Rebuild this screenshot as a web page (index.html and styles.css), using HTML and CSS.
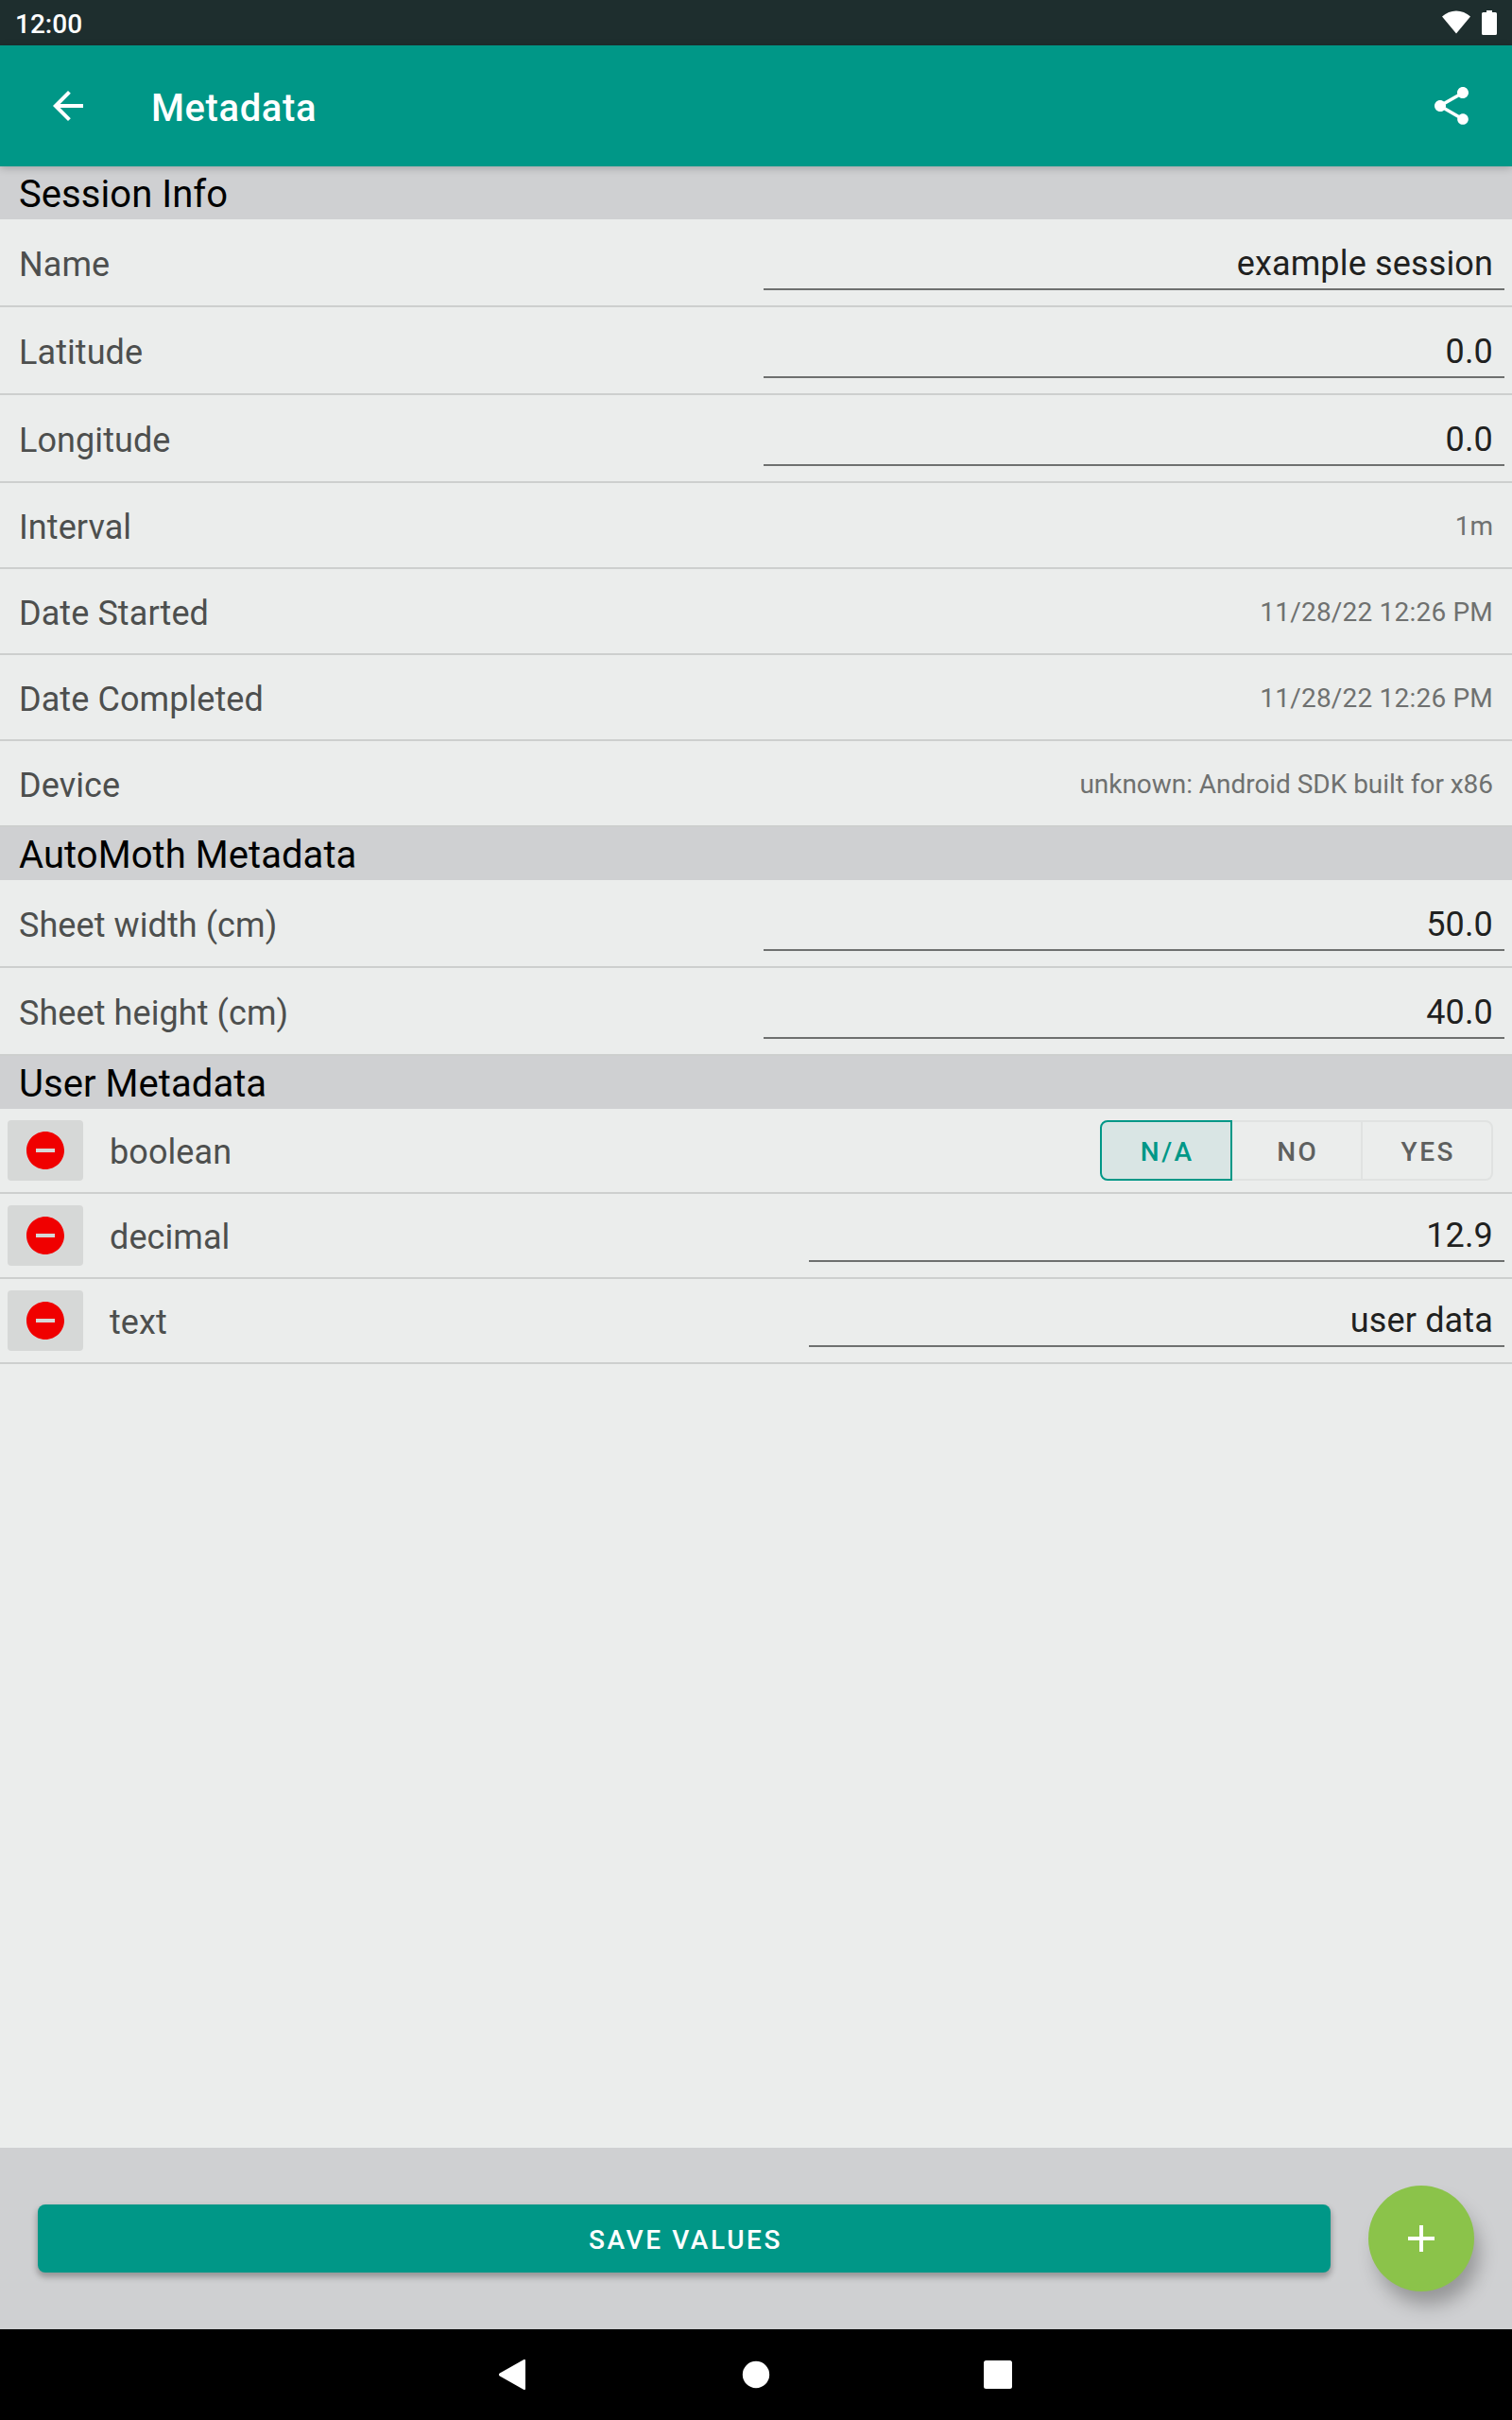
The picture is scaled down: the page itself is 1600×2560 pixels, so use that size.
FILE: index.html
```
<!DOCTYPE html>
<html lang="en">
<head>
<meta charset="utf-8">
<title>Metadata</title>
<link rel="stylesheet" href="styles.css">
</head>
<body>
<div class="status-bar">
  <span class="clock">12:00</span>
  <svg class="status-icons" width="60" height="28" viewBox="0 0 60 28">
    <path d="M2 7.5C10.500-.5 23.500-.5 32 7.500L17 25.500Z"/>
    <path d="M49 1h6v2h3.500q1.500 0 1.500 1.500V25.500q0 1.500-1.500 1.500H45.500q-1.500 0-1.500-1.500V4.500q0-1.500 1.500-1.500H49Z"/>
  </svg>
</div>
<header class="app-bar">
  <svg class="icon" viewBox="0 0 24 24"><path d="M20 11H7.830l5.590-5.590L12 4l-8 8 8 8 1.410-1.410L7.830 13H20v-2z"/></svg>
  <h1 class="app-title">Metadata</h1>
  <svg class="icon" viewBox="0 0 24 24"><path d="M18 16.080c-.76 0-1.440.3-1.960.77L8.910 12.700c.05-.23.09-.46.09-.7s-.04-.47-.09-.7l7.050-4.110c.54.5 1.250.81 2.040.81 1.660 0 3-1.340 3-3s-1.340-3-3-3-3 1.340-3 3c0 .24.04.47.09.7L8.040 9.810C7.500 9.310 6.790 9 6 9c-1.660 0-3 1.340-3 3s1.340 3 3 3c.79 0 1.500-.31 2.040-.81l7.120 4.160c-.05.21-.08.43-.08.65 0 1.610 1.310 2.920 2.920 2.920s2.920-1.310 2.920-2.920-1.310-2.920-2.920-2.920z"/></svg>
</header>
<main class="content">
  <h2 class="section">Session Info</h2>
  <div class="row editable"><span class="label">Name</span><span class="field">example session</span></div>
  <div class="row editable"><span class="label">Latitude</span><span class="field">0.0</span></div>
  <div class="row editable"><span class="label">Longitude</span><span class="field">0.0</span></div>
  <div class="row"><span class="label">Interval</span><span class="value">1m</span></div>
  <div class="row"><span class="label">Date Started</span><span class="value date">11/28/22 12:26 PM</span></div>
  <div class="row"><span class="label">Date Completed</span><span class="value date">11/28/22 12:26 PM</span></div>
  <div class="row"><span class="label">Device</span><span class="value">unknown: Android SDK built for x86</span></div>
  <h2 class="section">AutoMoth Metadata</h2>
  <div class="row editable"><span class="label">Sheet width (cm)</span><span class="field">50.0</span></div>
  <div class="row editable"><span class="label">Sheet height (cm)</span><span class="field">40.0</span></div>
  <h2 class="section">User Metadata</h2>
  <div class="row user">
    <span class="delete"><svg class="icon remove" viewBox="0 0 24 24"><path d="M12 2C6.480 2 2 6.480 2 12s4.480 10 10 10 10-4.480 10-10S17.520 2 12 2zm5 11H7v-2h10v2z"/></svg></span>
    <span class="label">boolean</span>
    <div class="toggle"><span class="option selected">N/A</span><span class="option">NO</span><span class="option">YES</span></div>
  </div>
  <div class="row user">
    <span class="delete"><svg class="icon remove" viewBox="0 0 24 24"><path d="M12 2C6.480 2 2 6.480 2 12s4.480 10 10 10 10-4.480 10-10S17.520 2 12 2zm5 11H7v-2h10v2z"/></svg></span>
    <span class="label">decimal</span><span class="field">12.9</span>
  </div>
  <div class="row user">
    <span class="delete"><svg class="icon remove" viewBox="0 0 24 24"><path d="M12 2C6.480 2 2 6.480 2 12s4.480 10 10 10 10-4.480 10-10S17.520 2 12 2zm5 11H7v-2h10v2z"/></svg></span>
    <span class="label">text</span><span class="field">user data</span>
  </div>
</main>
<footer class="actions">
  <div class="save">SAVE VALUES</div>
  <div class="fab"><svg class="icon" viewBox="0 0 24 24"><path d="M19 13h-6v6h-2v-6H5v-2h6V5h2v6h6v2z"/></svg></div>
</footer>
<nav class="nav-bar">
  <svg width="32" height="36" viewBox="0 0 32 36"><path d="M26 2.300Q28 1 28 3.500V32.500Q28 35 26 33.700L0.800 19.500Q-1 18 0.800 16.500Z"/></svg>
  <svg width="32" height="32" viewBox="0 0 32 32"><circle cx="16" cy="16" r="14.200"/></svg>
  <svg width="32" height="32" viewBox="0 0 32 32"><rect x="1" y="1" width="30" height="30" rx="2.500"/></svg>
</nav>
</body>
</html>
```
FILE: styles.css
```
* { box-sizing: border-box; }

body {
  margin: 0;
  width: 1600px;
  height: 2560px;
  display: flex;
  flex-direction: column;
  background: #ebedec;
  font-family: Roboto, "Liberation Sans", sans-serif;
}

h1, h2 { margin: 0; font-weight: 400; }

.status-bar {
  height: 48px;
  flex: none;
  display: flex;
  align-items: center;
  justify-content: space-between;
  padding: 0 16px;
  background: #1e2e2e;
  color: #fff;
  fill: #fff;
}
.clock { font-size: 28px; font-weight: 500; line-height: 32px; padding-top: 4px; }

.app-bar {
  height: 128px;
  flex: none;
  display: flex;
  align-items: center;
  padding: 0 40px 0 48px;
  background: #009787;
  color: #fff;
  fill: #fff;
  position: relative;
  box-shadow: 0 2px 8px rgba(0, 0, 0, .22);
}
.icon { width: 48px; height: 48px; display: block; flex: none; }
.app-title {
  flex: 1;
  padding: 6px 0 0 64px;
  font-size: 40px;
  font-weight: 500;
  line-height: 48px;
  letter-spacing: .6px;
}

.content { flex: 1; }

.section {
  height: 56px;
  padding: 5px 20px 0;
  background: #cfd0d2;
  color: #000;
  font-size: 40px;
  line-height: 50px;
  letter-spacing: .06px;
}

.row {
  height: 91px;
  display: flex;
  align-items: center;
  justify-content: space-between;
  padding-right: 20px;
  border-bottom: 2px solid #cdcfce;
}
.row.editable { height: 93px; }
.row.user { height: 90px; padding-left: 8px; }

.label {
  padding: 5px 0 0 20px;
  color: #4d4f4e;
  font-size: 36px;
  line-height: 42px;
  letter-spacing: .08px;
}
.user .label { flex: 1; padding: 4px 0 0 28px; }

.value {
  padding-top: 2px;
  color: #6f7170;
  font-size: 28px;
  line-height: 33px;
  letter-spacing: -.04px;
}
.value.date { letter-spacing: .2px; }

.field {
  align-self: flex-end;
  width: 784px;
  margin: 0 -12px 16px 0;
  padding: 0 12px 5px 0;
  border-bottom: 2px solid #6e706f;
  color: #1f2120;
  font-size: 36px;
  line-height: 42px;
  letter-spacing: .15px;
  text-align: right;
}
.user .field { width: 736px; }

.delete {
  width: 80px;
  height: 64px;
  display: flex;
  align-items: center;
  justify-content: center;
  border-radius: 4px;
  background: #d6d8d7;
}
.remove { fill: #f00000; }

.toggle { display: flex; }
.option {
  width: 140px;
  height: 64px;
  margin-left: -2px;
  padding-left: 2.5px;
  border: 2px solid #e0e2e1;
  color: #5e605f;
  font-size: 28px;
  font-weight: 500;
  line-height: 63px;
  letter-spacing: 2.5px;
  text-align: center;
}
.option:last-child { border-radius: 0 8px 8px 0; }
.option.selected {
  position: relative;
  margin-left: 0;
  border-color: #009787;
  border-radius: 8px 0 0 8px;
  background: #d9e5e4;
  color: #009787;
}

.actions {
  height: 192px;
  flex: none;
  display: flex;
  align-items: center;
  gap: 40px;
  padding: 0 40px;
  background: #cfd0d2;
  color: #fff;
}
.save {
  flex: 1;
  height: 72px;
  padding-left: 3px;
  border-radius: 8px;
  background: #009787;
  box-shadow: 0 4px 6px 1px rgba(0, 0, 0, .28);
  font-size: 28px;
  font-weight: 500;
  line-height: 76px;
  letter-spacing: 2.6px;
  text-align: center;
}
.fab {
  width: 112px;
  height: 112px;
  display: flex;
  align-items: center;
  justify-content: center;
  border-radius: 50%;
  background: #8bc34a;
  fill: #fff;
  box-shadow: 7px 16px 20px -2px rgba(0, 0, 0, .28);
}

.nav-bar {
  height: 96px;
  flex: none;
  display: flex;
  align-items: center;
  justify-content: center;
  gap: 224px;
  background: #000;
  fill: #fff;
}
```
